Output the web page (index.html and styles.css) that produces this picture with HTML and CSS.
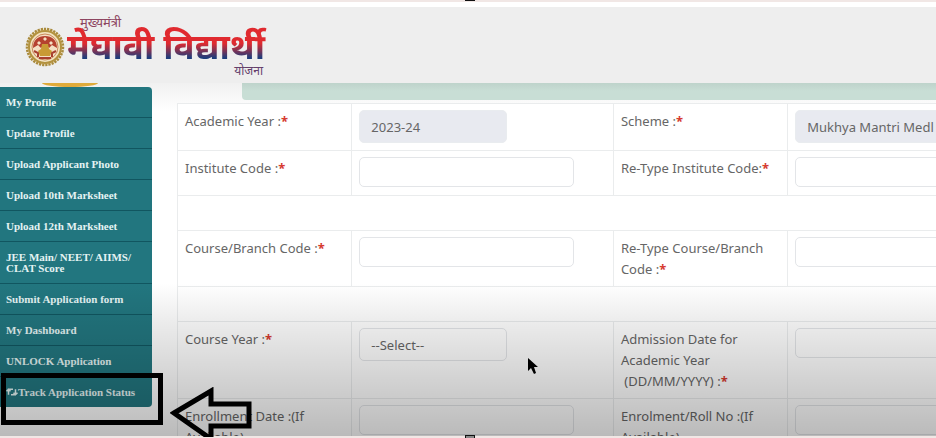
FILE: index.html
```html
<!DOCTYPE html>
<html lang="en">
<head>
    <meta charset="UTF-8">
    <meta name="viewport" content="width=device-width, initial-scale=1.0">
    <title>Application Form</title>
    <link rel="stylesheet" href="styles.css">
</head>
<body>
    <header class="header">
        <svg class="emblem" viewBox="0 0 40 40" aria-hidden="true">
            <circle cx="20" cy="20" r="18" fill="#f2e3c0" stroke="#a98a3c" stroke-width="2.5" stroke-dasharray="2.2 1"/>
            <circle cx="20" cy="20" r="16" fill="none" stroke="#b3923f" stroke-width="2"/>
            <circle cx="20" cy="20" r="13" fill="#f4dfc4" stroke="#c98a5c" stroke-width="1"/>
            <path d="M8 21c0-8 5-12 12-12s12 4 12 12l-5-3-3 3-4-4-4 4-3-3z" fill="#b5412f"/>
            <path d="M12 16l2-2 2 2-2 2zM24 16l2-2 2 2-2 2zM18 12l2-2 2 2-2 2z" fill="#f4dfc4"/>
            <path d="M17 17h6l1 5 3 2-2 5H15l-2-5 3-2z" fill="#c99a35"/>
            <path d="M9 24l4 2v4M31 24l-4 2v4M14 31h12" fill="none" stroke="#a8402f" stroke-width="2"/>
        </svg>
        <div class="brand" lang="hi">
            <span class="brand-top">मुख्यमंत्री</span>
            <span class="brand-name">मेघावी विद्यार्थी</span>
            <span class="brand-bottom">योजना</span>
        </div>
    </header>

    <main class="main">
        <nav class="sidebar">
            <div class="avatar-edge"></div>
            <ul class="menu">
                <li><a href="#">My Profile</a></li>
                <li><a href="#">Update Profile</a></li>
                <li><a href="#">Upload Applicant Photo</a></li>
                <li><a href="#">Upload 10th Marksheet</a></li>
                <li><a href="#">Upload 12th Marksheet</a></li>
                <li><a href="#">JEE Main/ NEET/ AIIMS/ CLAT Score</a></li>
                <li><a href="#">Submit Application form</a></li>
                <li><a href="#">My Dashboard</a></li>
                <li><a href="#">UNLOCK Application</a></li>
                <li><a href="#"><svg class="track-icon" viewBox="0 0 12 8" aria-hidden="true"><path d="M2.5 6.8V1.2H7M.5 3.2l2-2 2 2M9.5 1.2v5.6H5M7.500 4.800l2 2 2-2" fill="none" stroke="currentColor" stroke-width="1.5"/></svg>Track Application Status</a></li>
            </ul>
        </nav>

        <form class="content">
            <div class="alert"></div>
            <table class="form-table">
                <tr>
                    <th><label for="year">Academic Year :<b>*</b></label></th>
                    <td><input class="field short" id="year" type="text" value="2023-24" disabled></td>
                    <th><label for="scheme">Scheme :<b>*</b></label></th>
                    <td><input class="field" id="scheme" type="text" value="Mukhya Mantri Medl" disabled></td>
                </tr>
                <tr>
                    <th><label for="inst">Institute Code :<b>*</b></label></th>
                    <td><input class="field" id="inst" type="text"></td>
                    <th><label for="inst2">Re-Type Institute Code:<b>*</b></label></th>
                    <td><input class="field" id="inst2" type="text"></td>
                </tr>
                <tr class="row-blank"><td colspan="4"></td></tr>
                <tr>
                    <th><label for="course">Course/Branch Code :<b>*</b></label></th>
                    <td><input class="field" id="course" type="text"></td>
                    <th><label for="course2">Re-Type Course/Branch Code :<b>*</b></label></th>
                    <td><input class="field" id="course2" type="text"></td>
                </tr>
                <tr class="row-blank"><td colspan="4"></td></tr>
                <tr>
                    <th><label for="cyear">Course Year :<b>*</b></label></th>
                    <td><select class="field short" id="cyear"><option>--Select--</option></select></td>
                    <th><label for="adm">Admission Date for Academic Year<br>&nbsp;(DD/MM/YYYY) :<b>*</b></label></th>
                    <td><input class="field" id="adm" type="text"></td>
                </tr>
                <tr>
                    <th><label for="enr">Enrollment Date :(If Available)</label></th>
                    <td><input class="field" id="enr" type="text"></td>
                    <th><label for="roll">Enrolment/Roll No :(If Available)</label></th>
                    <td><input class="field" id="roll" type="text"></td>
                </tr>
            </table>
        </form>
    </main>

    <!-- Highlight drawn over the page -->
    <div class="mark-box"></div>
    <svg class="mark-arrow" viewBox="0 0 82 50" aria-hidden="true">
        <path d="M4 26L41 4v13h38v22H41v13z" fill="none" stroke="#000" stroke-width="5"/>
    </svg>
    <svg class="cursor" viewBox="0 0 11 18" aria-hidden="true">
        <path d="M1 1v13l3-3 3 6 2-1-2-6h4z" fill="#000"/>
    </svg>
    <div class="handle handle-top"></div>
    <div class="handle handle-bottom"></div>
</body>
</html>
```
FILE: styles.css
```css
* {
    margin: 0;
    padding: 0;
    box-sizing: border-box;
}

body {
    display: flex;
    flex-direction: column;
    position: relative;
    height: 100vh;
    overflow: hidden;
    font-family: "Noto Sans", "Open Sans", sans-serif;
    font-size: 13px;
    color: #666;
    background-color: #fff;
}

body::before,
body::after {
    content: "";
    flex: 0 0 2px;
    background-color: #f1e7e5;
}

.header {
    display: flex;
    flex-shrink: 0;
    gap: 2px;
    height: 81px;
    padding: 11px 25px 0;
    border-top: 5px solid #fff;
    background-color: #eee;
}

.emblem {
    width: 40px;
    height: 40px;
    margin-top: 9px;
}

.brand {
    display: flex;
    flex-direction: column;
    width: 202px;
    font-family: "Noto Sans Devanagari", "Noto Sans", serif;
    font-weight: bold;
    white-space: nowrap;
}

.brand-top {
    padding-left: 13px;
    font-size: 13px;
    font-weight: normal;
    line-height: 11px;
    color: #8d4560;
}

.brand-name {
    margin: -10px 0 -6px;
    padding-top: 10px;
    font-size: 35px;
    line-height: 44px;
    color: transparent;
    background: linear-gradient(#e02a2f 45%, #1d3c7c 72%);
    background-clip: text;
    -webkit-background-clip: text;
}

.brand-bottom {
    padding-right: 6px;
    font-size: 12px;
    font-weight: normal;
    line-height: 11px;
    text-align: right;
    color: #64406c;
}

.main {
    display: flex;
    flex: 1;
    position: relative;
    gap: 25px;
    min-height: 0;
    overflow: hidden;
    background: linear-gradient(#f1f1f1, #fff 28px);
}

/* Shade at the foot of the page */
.main::after {
    content: "";
    position: absolute;
    inset: 200px 0 0;
    background: linear-gradient(rgba(0, 0, 0, 0), rgba(0, 0, 0, 0.08) 26%, rgba(0, 0, 0, 0.27));
    pointer-events: none;
}

.sidebar {
    flex: 0 0 152px;
}

.avatar-edge {
    width: 56px;
    height: 4px;
    margin-left: 42px;
    border-radius: 0 0 50% 50% / 0 0 100% 100%;
    background-color: #dfab3b;
}

.menu {
    list-style: none;
    border-radius: 0 4px 4px 0;
    overflow: hidden;
    background-color: #22767f;
}

.menu li + li {
    border-top: 1px solid #115660;
}

.menu a {
    display: block;
    padding: 10px 16px 9px 6px;
    font-family: "Liberation Serif", serif;
    font-size: 11px;
    font-weight: bold;
    line-height: 11px;
    color: #e4f3f3;
    text-decoration: none;
}

.track-icon {
    width: 12px;
    height: 8px;
}

.content {
    flex: 1;
    min-width: 0;
}

.alert {
    height: 17px;
    margin: 0 0 3px 65px;
    border-radius: 0 0 0 4px;
    background: linear-gradient(#bed3cb, #c8ded5 8px);
}

/* Wider than the window, the last column runs off the side */
.form-table {
    width: 115%;
    table-layout: fixed;
    border-collapse: collapse;
    background-color: #fff;
}

.form-table th,
.form-table td {
    height: 45px;
    padding: 6px 7px 7px;
    border: 1px solid #eaeced;
    text-align: left;
    vertical-align: top;
}

.form-table th {
    width: 20%;
    padding: 7px 7px 6px;
    font-weight: normal;
    line-height: 21px;
}

.form-table td {
    width: 30%;
}

.form-table .row-blank > * {
    height: 35px;
}

.form-table b {
    color: #d63a30;
}

.field {
    display: block;
    width: 87%;
    height: 30px;
    padding: 0 11px;
    border: 1px solid #e3e5e8;
    border-radius: 5px;
    font: inherit;
    color: #666;
    background-color: #fff;
    appearance: none;
}

.field:disabled {
    height: 33px;
    border-color: #e9ecef;
    background-color: #e8eaf0;
}

.short {
    width: 60%;
}

select.field {
    height: 33px;
}

.mark-box {
    position: absolute;
    left: 1px;
    top: 373px;
    width: 162px;
    height: 52px;
    border: 5px solid #000;
}

.mark-arrow {
    position: absolute;
    left: 170px;
    top: 387px;
    width: 82px;
    height: 50px;
}

.cursor {
    position: absolute;
    left: 527px;
    top: 357px;
    width: 11px;
    height: 18px;
}

.handle {
    position: absolute;
    left: 465px;
    width: 10px;
    background-color: #111;
}

.handle-top {
    top: 0;
    height: 1px;
}

.handle-bottom {
    bottom: 0;
    height: 3px;
    border: 1px solid #111;
    border-bottom: 0;
    background-color: #888;
}
```
